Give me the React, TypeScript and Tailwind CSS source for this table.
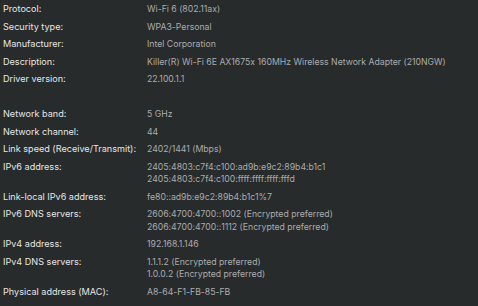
const rows: [string, string[]][] = [
  ['Protocol:', ['Wi-Fi 6 (802.11ax)']],
  ['Security type:', ['WPA3-Personal']],
  ['Manufacturer:', ['Intel Corporation']],
  ['Description:', ['Killer(R) Wi-Fi 6E AX1675x 160MHz Wireless Network Adapter (210NGW)']],
  ['Driver version:', ['22.100.1.1']],
  ['', ['']],
  ['Network band:', ['5 GHz']],
  ['Network channel:', ['44']],
  ['Link speed (Receive/Transmit):', ['2402/1441 (Mbps)']],
  ['IPv6 address:', ['2405:4803:c7f4:c100:ad9b:e9c2:89b4:b1c1', '2405:4803:c7f4:c100:ffff:ffff:ffff:fffd']],
  ['Link-local IPv6 address:', ['fe80::ad9b:e9c2:89b4:b1c1%7']],
  ['IPv6 DNS servers:', ['2606:4700:4700::1002 (Encrypted preferred)', '2606:4700:4700::1112 (Encrypted preferred)']],
  ['IPv4 address:', ['192.168.1.146']],
  ['IPv4 DNS servers:', ['1.1.1.2 (Encrypted preferred)', '1.0.0.2 (Encrypted preferred)']],
  ['Physical address (MAC):', ['A8-64-F1-FB-85-FB']],
];

export default function App() {
  return (
    <div className="w-[478px] h-[306px] overflow-hidden bg-[#272b2c] px-[3px] pt-[3px] font-['Inter',sans-serif] [font-feature-settings:'calt'_0] leading-[12.5px]">
      <div className="grid grid-cols-[144px_1fr] gap-y-[5px]">
        {rows.map(([label, values], i) => (
          <div key={i} className="contents">
            <div className="text-[#e6e6e6] text-[9.1px] whitespace-nowrap min-h-[12.5px]">{label}</div>
            <div className="text-[#acacac] text-[8.7px] whitespace-nowrap">
              {values.map((v, j) => (
                <div key={j}>{v}</div>
              ))}
            </div>
          </div>
        ))}
      </div>
    </div>
  );
}
